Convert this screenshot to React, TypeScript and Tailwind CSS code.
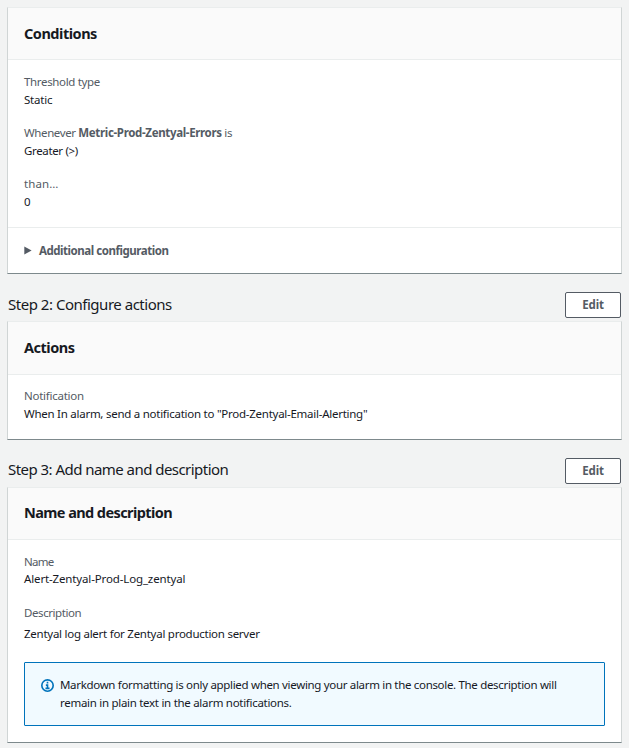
import React from "react";

function Edit() {
  return (
    <button className="h-[26px] w-14 shrink-0 rounded-[2px] border border-[#545b64] bg-white text-[11.5px] leading-4 font-bold tracking-[-0.1px] text-[#545b64]">
      Edit
    </button>
  );
}

function StepHeader({ title, className }: { title: string; className: string }) {
  return (
    <div className="flex h-[26px] items-start justify-between pr-px pl-px">
      <h1 className={`text-[15px] leading-5 text-[#16191f] ${className}`}>{title}</h1>
      <Edit />
    </div>
  );
}

function CardHeader({ title, className }: { title: string; className: string }) {
  return (
    <div className={`flex items-start border-b border-[#eaeded] bg-[#fafafa] px-4 text-[14.5px] leading-5 font-bold text-[#16191f] ${className}`}>
      <h2>{title}</h2>
    </div>
  );
}

type FieldProps = {
  label: React.ReactNode;
  value: string;
  labelClass?: string;
  valueClass?: string;
};

function Field({ label, value, labelClass = "tracking-[-0.3px]", valueClass = "tracking-[-0.26px]" }: FieldProps) {
  return (
    <div className="text-[11.5px] leading-[18px]">
      <div className={`text-[#545b64] ${labelClass}`}>{label}</div>
      <div className={`text-[#16191f] ${valueClass}`}>{value}</div>
    </div>
  );
}

const card = "border border-t-[#eaeded] border-x-[#d0d5d5] border-b-[#7d898c] bg-white";

export default function App() {
  return (
    <main className="h-[748px] w-[629px] overflow-hidden bg-[#f2f3f3] pt-[7px] pr-[7px] pl-[7px] font-['Noto_Sans',sans-serif]">
      <section className={`h-[267px] ${card}`}>
        <CardHeader title="Conditions" className="h-[52px] pt-[15px] tracking-[-0.48px]" />
        <div className="flex h-[168px] flex-col gap-[15px] border-b border-[#eaeded] px-4 pt-[13px]">
          <Field label="Threshold type" value="Static" labelClass="tracking-[-0.34px]" valueClass="tracking-[-0.2px]" />
          <Field
            label={<>Whenever <b className="tracking-[-0.34px]">Metric-Prod-Zentyal-Errors</b> is</>}
            value="Greater (>)"
            labelClass="tracking-[-0.38px]"
            valueClass="tracking-[-0.35px]"
          />
          <Field label="than…" value="0" labelClass="tracking-[0.1px]" />
        </div>
        <div className="flex h-[45px] items-center px-4 text-[11.5px] font-bold tracking-[-0.46px] text-[#545b64]">
          <svg className="mr-[7px] h-[9px] w-2" viewBox="0 0 8 9"><path d="M0.3 0.5L7.6 4.5L0.3 8.5Z" fill="currentColor" /></svg>
          Additional configuration
        </div>
      </section>
      <div className="pt-[18px] pb-[3px]"><StepHeader title="Step 2: Configure actions" className="mt-[2px] tracking-[-0.48px]" /></div>
      <section className={`h-[119px] ${card}`}>
        <CardHeader title="Actions" className="h-[53px] pt-[15px] tracking-[-0.5px]" />
        <div className="px-4 pt-[12px]">
          <Field label="Notification" value={'When In alarm, send a notification to "Prod-Zentyal-Email-Alerting"'} labelClass="tracking-[-0.25px]" />
        </div>
      </section>
      <div className="pt-[18px] pb-[3px]"><StepHeader title="Step 3: Add name and description" className="mt-px tracking-[-0.54px]" /></div>
      <section className={`h-[256px] ${card}`}>
        <CardHeader title="Name and description" className="h-[52px] pt-[14px] tracking-[-0.58px]" />
        <div className="px-4 pt-[13px] text-[11.5px] leading-[18px] text-[#16191f]">
          <Field label="Name" value="Alert-Zentyal-Prod-Log_zentyal" labelClass="tracking-[-0.7px]" valueClass="-mt-px tracking-[-0.14px]" />
          <div className="mt-[16px] tracking-[-0.42px] text-[#545b64]">Description</div>
          <div className="mt-[3px] tracking-[-0.26px]">Zentyal log alert for Zentyal production server</div>
          <div className="mt-[19px] flex h-16 rounded-[1px] border border-[#0073bb] bg-[#f1faff] px-4 pt-[13px]">
            <svg className="mt-[3px] mr-[6px] h-[13px] w-[13px] shrink-0 text-[#0073bb]" viewBox="0 0 16 16" fill="none" stroke="currentColor" strokeWidth="2"><circle cx="8" cy="8" r="7" /><path d="M6 7.5h2v4M5.5 11.5h5M7 4.5h2" /></svg>
            <p className="whitespace-nowrap tracking-[-0.32px]">Markdown formatting is only applied when viewing your alarm in the console. The description will<br /><span className="tracking-[-0.29px]">remain in plain text in the alarm notifications.</span></p>
          </div>
        </div>
      </section>
    </main>
  );
}
